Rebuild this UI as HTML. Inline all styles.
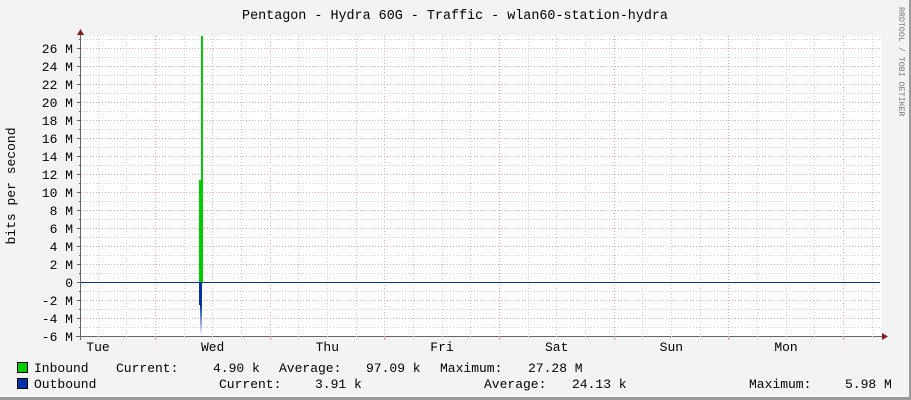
<!DOCTYPE html><html><head><style>body{margin:0;background:#f3f3f3}svg{display:block}text{font-family:"Liberation Mono","DejaVu Sans Mono",monospace;font-size:13px;fill:#000}.l{font-size:13px}</style></head><body>
<svg width="911" height="400" xmlns="http://www.w3.org/2000/svg">
<rect width="911" height="400" fill="#f3f3f3"/>
<rect x="909" y="0" width="2" height="400" fill="#9a9a9a"/>
<rect x="0" y="397" width="911" height="3" fill="#9a9a9a"/>
<rect x="81" y="36" width="800" height="300" fill="#fff"/>
<g id="g"></g>
<text x="455" y="19" text-anchor="middle" style="font-size:13.4px">Pentagon - Hydra 60G - Traffic - wlan60-station-hydra</text>
<text transform="translate(15,186) rotate(-90)" text-anchor="middle">bits per second</text>
<text transform="translate(899,7) rotate(90)" style="font-size:8.3px;fill:#777">RRDTOOL / TOBI OETIKER</text>
<polygon points="199,282 199,180 201,180 201,36 203,36 203,282" fill="#00cc00"/>
<polygon points="199,282 199,305 200,305 201,336 202,305 202,282" fill="#0033aa"/>
<line x1="81" y1="282.5" x2="880" y2="282.5" stroke="#0033aa" stroke-width="1"/>
<line x1="80.5" y1="30" x2="80.5" y2="340" stroke="#666"/>
<line x1="76" y1="336.5" x2="885" y2="336.5" stroke="#666"/>
<polygon points="77,35 84,35 80.5,29" fill="#8b1a1a"/>
<polygon points="882,333 882,340 888,336.5" fill="#8b1a1a"/>
<g id="t"></g>
<rect x="17.5" y="362.5" width="10" height="10" fill="#00cc00" stroke="#000"/>
<rect x="17.5" y="378.5" width="10" height="10" fill="#0033aa" stroke="#000"/>
<text class="l" x="34" y="372">Inbound</text>
<text class="l" x="116" y="372">Current:</text>
<text class="l" x="213" y="372">4.90 k</text>
<text class="l" x="279" y="372">Average:</text>
<text class="l" x="366" y="372">97.09 k</text>
<text class="l" x="440" y="372">Maximum:</text>
<text class="l" x="528" y="372">27.28 M</text>
<text class="l" x="34" y="388">Outbound</text>
<text class="l" x="219" y="388">Current:</text>
<text class="l" x="315" y="388">3.91 k</text>
<text class="l" x="484" y="388">Average:</text>
<text class="l" x="572" y="388">24.13 k</text>
<text class="l" x="749" y="388">Maximum:</text>
<text class="l" x="845" y="388">5.98 M</text>
</svg>
<script>
const ns="http://www.w3.org/2000/svg",g=document.getElementById('g'),t=document.getElementById('t');
function l(p,a){const e=document.createElementNS(ns,'line');for(const k in a)e.setAttribute(k,a[k]);p.appendChild(e);}
for(let n=-2;n<=25;n++){const x=Math.round(155+28.667*n)+.5;const m=((n%4)+4)%4==0;
l(g,{x1:x,y1:36,x2:x,y2:336,stroke:m?'#f2a0a0':'#cfcfcf','stroke-dasharray':'1,2'});
l(t,{x1:x,y1:336,x2:x,y2:m?340:338,stroke:m?'#f2a0a0':'#cfcfcf'});}
for(let k=-6;k<=27;k++){const y=282-9*k+.5;const m=k%2==0;
if(k!=0)l(g,{x1:81,y1:y,x2:880,y2:y,stroke:m?'#f2a0a0':'#cfcfcf','stroke-dasharray':'1,2'});
l(t,{x1:m?77:79,y1:y,x2:81,y2:y,stroke:'#666'});
if(m){const e=document.createElementNS(ns,'text');e.setAttribute('x',73);e.setAttribute('y',y+4.5);e.setAttribute('text-anchor','end');e.textContent=k==0?'0':k+' M';t.appendChild(e);}}
['Tue','Wed','Thu','Fri','Sat','Sun','Mon'].forEach((d,i)=>{const e=document.createElementNS(ns,'text');e.setAttribute('x',98+114.67*i);e.setAttribute('y',351);e.setAttribute('text-anchor','middle');e.textContent=d;t.appendChild(e);});
</script>
</body></html>
